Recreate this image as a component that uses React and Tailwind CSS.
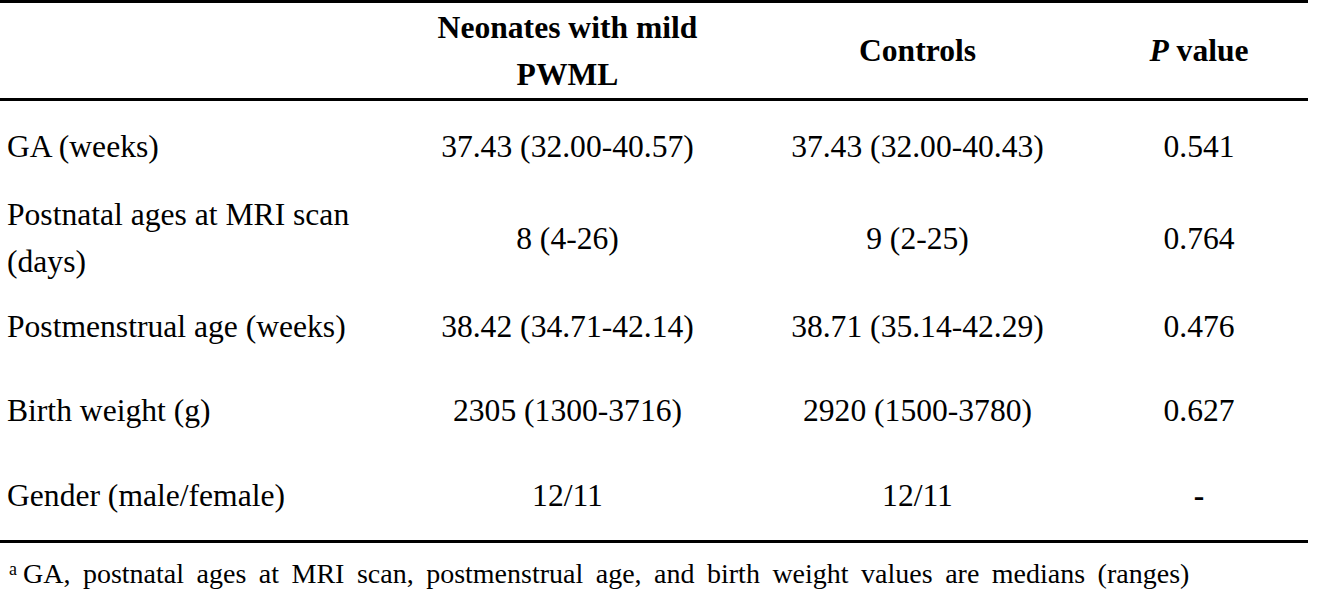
const rows = [
  { label: ["GA (weeks)"], a: "37.43 (32.00-40.57)", b: "37.43 (32.00-40.43)", p: "0.541", h: "h-[90px]" },
  { label: ["Postnatal ages at MRI scan", "(days)"], a: "8 (4-26)", b: "9 (2-25)", p: "0.764", h: "h-[92px]" },
  { label: ["Postmenstrual age (weeks)"], a: "38.42 (34.71-42.14)", b: "38.71 (35.14-42.29)", p: "0.476", h: "h-[86px]" },
  { label: ["Birth weight (g)"], a: "2305 (1300-3716)", b: "2920 (1500-3780)", p: "0.627", h: "h-[82px]" },
  { label: ["Gender (male/female)"], a: "12/11", b: "12/11", p: "-", h: "h-[89px]" },
];

export default function App() {
  return (
    <div className="w-[1325px] h-[608px] bg-white text-black font-['Liberation_Serif',serif] text-[31.6px] leading-[47px]">
      <div className="w-[1308px]">
        <div className="h-[3px] bg-black" />
        <div className="grid grid-cols-[390px_355px_345px_218px] h-[95px] items-center font-bold">
          <div />
          <div className="text-center">
            <div>Neonates with mild</div>
            <div>PWML</div>
          </div>
          <div className="text-center">Controls</div>
          <div className="text-center">
            <span className="italic">P</span> value
          </div>
        </div>
        <div className="h-[3px] bg-black" />
        {rows.map((r, i) => (
          <div key={i} className={`grid grid-cols-[390px_355px_345px_218px] items-center ${r.h}`}>
            <div className="pl-[7px]">
              {r.label.map((l, j) => (
                <div key={j}>{l}</div>
              ))}
            </div>
            <div className="text-center">{r.a}</div>
            <div className="text-center">{r.b}</div>
            <div className={`text-center ${r.p === "-" ? "font-bold" : ""}`}>{r.p}</div>
          </div>
        ))}
        <div className="h-[3px] bg-black" />
        <div className="pl-[9px] pt-[5px] text-[28px] leading-[42px] whitespace-nowrap [word-spacing:5.5px]">
          <span className="text-[18px] align-[8px] mr-[6px]">a</span>GA, postnatal ages at MRI scan, postmenstrual age, and birth weight values are medians (ranges)
        </div>
      </div>
    </div>
  );
}
